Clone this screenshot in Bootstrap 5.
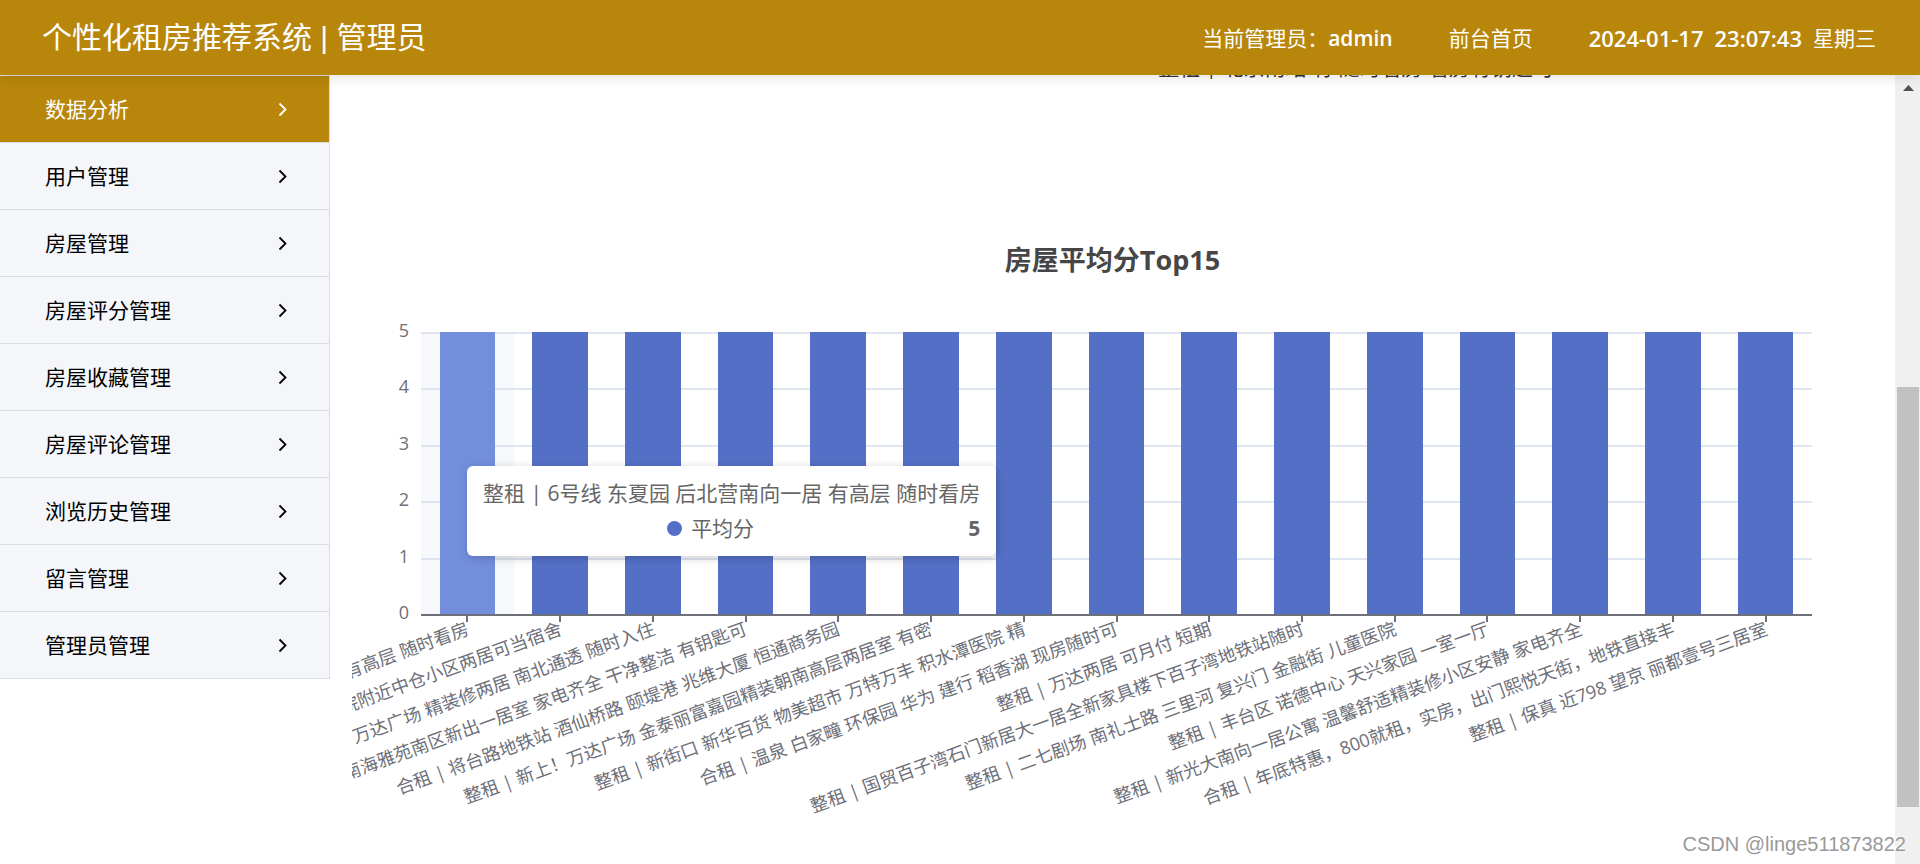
<!DOCTYPE html>
<html lang="zh-CN">
<head>
<meta charset="utf-8">
<meta name="viewport" content="width=device-width, initial-scale=1">
<title>个性化租房推荐系统 | 管理员</title>
<link href="https://cdn.jsdelivr.net/npm/bootstrap@5.3.0/dist/css/bootstrap.min.css" rel="stylesheet">
<style>
  :root { --gold: #b8860b; --line: #dadfe6; --axis: #6e7079; --bar: #5470c6; }
  body { font-family: "Open Sans", "Noto Sans CJK SC", sans-serif; font-size: 21px; line-height: 30px; color: #000; }
  .topbar { background: var(--gold); min-height: 75px; padding: 0 44px 0 42px; box-shadow: 0 2px 12px rgba(0,0,0,.12); z-index: 3; }
  .brand { font: 400 30px/40px "Liberation Sans", "Noto Sans CJK SC", sans-serif; }
  .topbar-info { gap: 56px; }
  .latin { font-weight: 600; }
  .clock { gap: 11px; }
  .clock .latin { font-size: 22px; }
  .side { width: 330px; }
  .side-link { height: 67px; padding: 0 42px 0 45px; background: #f4f6fa; color: #000; border-bottom: 1px solid var(--line); border-right: 1px solid var(--line); }
  .side-link:first-child { border-top: 1px solid var(--line); height: 68px; }
  .side-link.active { background: var(--gold); color: #fff; }
  .side-link svg { width: 9px; height: 15px; fill: none; stroke: currentColor; stroke-width: 1.8; }
  .stage { padding: 0 22px; }
  .prev-labels { height: 4px; padding-left: 53%; color: #333; line-height: 24px; }
  .chart-title { margin-top: 161px; font-size: 27px; line-height: 40px; font-weight: 700; color: #464646; }
  .chart { padding: 52px 61px 0 0; }
  .y-axis { width: 69px; height: 302px; margin-top: -12px; padding-right: 12px; font-size: 18px; line-height: 20px; color: var(--axis); }
  .plot { height: 284px; border-bottom: 2px solid var(--axis); }
  .grid-lines { z-index: 0; }
  .grid-lines i { flex: 1 1 0; border-top: 2px solid #e0e6f1; }
  .slot { z-index: 1; }
  .slot::after { content: ""; position: absolute; left: 50%; top: 100%; width: 2px; height: 8px; margin-left: -1px; background: var(--axis); }
  .slot.hovered { background: rgba(210,219,238,.2); }
  .bar-fill { width: 60%; background: var(--bar); }
  .hovered .bar-fill { background: #738edd; }
  .x-label { position: absolute; right: 50%; top: 100%; margin: 4px 3px 0 0; white-space: nowrap; font-size: 18px; line-height: 20px; color: var(--axis); transform-origin: 100% 0; transform: rotate(-20deg); }
  .tip { left: 46px; top: 134px; min-width: 529px; padding: 10px 16px; z-index: 2; border-radius: 6px; background: #fff; color: #666; box-shadow: 1px 2px 10px rgba(0,0,0,.2); line-height: 35px; white-space: nowrap; }
  .tip-dot { width: 15px; height: 15px; margin-right: 9px; background: var(--bar); }
  .tip-value { margin-left: 30px; }
  .scroll { width: 25px; background: #f0f0f0; padding: 10px 1px 0 2px; }
  .scroll svg { width: 11px; height: 6px; fill: #505050; }
  .scroll-thumb { height: 420px; margin-top: 296px; background: #c1c1c1; }
  .stamp { right: 14px; bottom: 6px; z-index: 4; font: 20px/28px "Liberation Sans", sans-serif; color: #999; text-shadow: -1px -1px 0 #fff; }
</style>
</head>
<body class="vh-100 d-flex flex-column overflow-hidden position-relative bg-white">
<header class="topbar d-flex align-items-center justify-content-between text-white position-relative">
  <h1 class="brand m-0">个性化租房推荐系统 | 管理员</h1>
  <div class="topbar-info d-flex align-items-center">
    <span>当前管理员：<span class="latin">admin</span></span>
    <a href="#" class="text-white text-decoration-none">前台首页</a>
    <time class="clock d-flex" datetime="2024-01-17T23:07:43"><span class="latin">2024-01-17</span><span class="latin">23:07:43</span><span>星期三</span></time>
  </div>
</header>
<div class="d-flex flex-grow-1 overflow-hidden">
  <nav class="side flex-shrink-0 d-flex flex-column" id="side" aria-label="管理菜单"></nav>
  <main class="stage flex-grow-1 overflow-hidden">
    <div class="prev-labels overflow-hidden d-flex align-items-end"><span class="text-nowrap">整租 | 北京南站 有 随时看房 看房有钥匙可</span></div>
    <section class="overflow-hidden h-100" aria-labelledby="chartTitle">
      <h2 class="chart-title text-center mb-0" id="chartTitle">房屋平均分Top15</h2>
      <div class="chart d-flex">
        <div class="y-axis flex-shrink-0 d-flex flex-column justify-content-between text-end"><span>5</span><span>4</span><span>3</span><span>2</span><span>1</span><span>0</span></div>
        <div class="plot flex-grow-1 d-flex position-relative" id="plot">
          <div class="grid-lines position-absolute top-0 start-0 w-100 h-100 d-flex flex-column"><i></i><i></i><i></i><i></i><i></i></div>
          <div class="tip position-absolute" role="tooltip">
            <div>整租 | 6号线 东夏园 后北营南向一居 有高层 随时看房</div>
            <div class="d-flex align-items-center">
              <div class="flex-grow-1 d-flex align-items-center justify-content-center"><span class="tip-dot rounded-circle"></span>平均分</div>
              <b class="tip-value">5</b>
            </div>
          </div>
        </div>
      </div>
    </section>
  </main>
  <div class="scroll flex-shrink-0" aria-hidden="true">
    <svg class="d-block mx-auto" viewBox="0 0 11 6"><path d="M5.500 0L11 6H0z"/></svg>
    <div class="scroll-thumb"></div>
  </div>
</div>
<div class="stamp position-absolute">CSDN @linge511873822</div>
<script src="https://cdn.jsdelivr.net/npm/bootstrap@5.3.0/dist/js/bootstrap.bundle.min.js"></script>
<script>
  const menu = ['数据分析', '用户管理', '房屋管理', '房屋评分管理', '房屋收藏管理', '房屋评论管理', '浏览历史管理', '留言管理', '管理员管理'];
  document.getElementById('side').innerHTML = menu.map((name, i) =>
    `<a href="#" class="side-link d-flex align-items-center justify-content-between text-decoration-none${i ? '' : ' active'}">${name}<svg viewBox="0 0 9 15" aria-hidden="true"><path d="M1.500 1.500L7.500 7.500L1.500 13.500"/></svg></a>`).join('');

  const houses = [
    ['整租 | 6号线 东夏园 后北营南向一居 有高层 随时看房', 5],
    ['整租 | 潞河医院附近中仓小区两居可当宿舍', 5],
    ['整租 | 万达广场 精装修两居 南北通透 随时入住', 5],
    ['整租 | 南海雅苑南区新出一居室 家电齐全 干净整洁 有钥匙可', 5],
    ['合租 | 将台路地铁站 酒仙桥路 颐堤港 兆维大厦 恒通商务园', 5],
    ['整租 | 新上！万达广场 金泰丽富嘉园精装朝南高层两居室 有密', 5],
    ['整租 | 新街口 新华百货 物美超市 万特万丰 积水潭医院 精', 5],
    ['合租 | 温泉 白家疃 环保园 华为 建行 稻香湖 现房随时可', 5],
    ['整租 | 万达两居 可月付 短期', 5],
    ['整租 | 国贸百子湾石门新居大一居全新家具楼下百子湾地铁站随时', 5],
    ['整租 | 二七剧场 南礼士路 三里河 复兴门 金融街 儿童医院', 5],
    ['整租 | 丰台区 诺德中心 天兴家园 一室一厅', 5],
    ['整租 | 新光大南向一居公寓 温馨舒适精装修小区安静 家电齐全', 5],
    ['合租 | 年底特惠，800就租，实房，出门熙悦天街，地铁直接丰', 5],
    ['整租 | 保真 近798 望京 丽都壹号三居室', 5]
  ];
  document.getElementById('plot').insertAdjacentHTML('beforeend', houses.map(([name, score], i) =>
    `<div class="slot col position-relative d-flex align-items-end justify-content-center${i ? '' : ' hovered'}"><div class="bar-fill" style="height:${score / 5 * 100}%"></div><span class="x-label">${name}</span></div>`).join(''));
</script>
</body>
</html>
